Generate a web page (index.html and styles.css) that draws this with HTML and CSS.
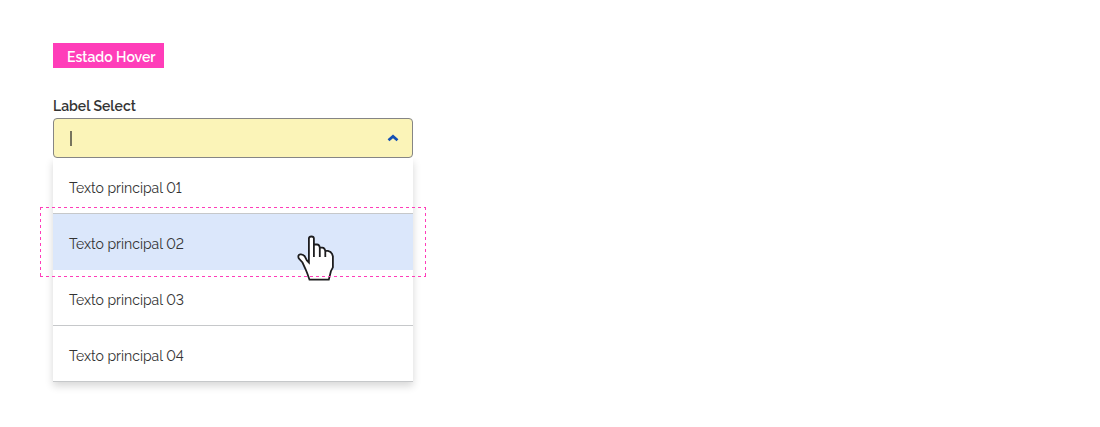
FILE: index.html
```html
<!DOCTYPE html>
<html lang="es">
<head>
<meta charset="utf-8">
<title>Select</title>
<link rel="stylesheet" href="styles.css">
</head>
<body>
<main class="demo">
  <div class="tag">Estado Hover</div>
  <div class="label">Label Select</div>
  <div class="field">
    <span class="caret"></span>
    <svg class="chevron" width="12" height="8" viewBox="0 0 12 8"><path d="M1.5 6.3 6 2.4l4.5 3.9" fill="none" stroke="#1450b4" stroke-width="2.7"/></svg>
  </div>
  <ul class="menu">
    <li class="option"><span>Texto principal 01</span></li>
    <li class="option hover"><span>Texto principal 02</span>
      <svg class="hand" width="40" height="48" viewBox="0 0 40 48"><path d="M12.9 29.5V5.5q0-2 2.5-2t2.5 2v6h3.2q2.2 0 2.7 3.1h2.5q2.3 0 3 3.3h2.7q3 .5 4.2 3.3l.7 2.2v11l-2 3.8-2.1 8.5h-19.3l-2-5.7-2-5-3-6.5-3.8-4.2q-1.2-3.4 1.6-3.9 2.8-.5 4.6 2.2l2 3.8zM17.9 11v13M23.8 14v10M29.3 18v6" fill="#fff" stroke="#1d1d1f" stroke-width="1.8"/></svg>
      <svg class="outline" width="386" height="70"><path d="M0 .5H386M0 69.5H386M.5 0V70M385.5 0V70" fill="none" stroke="#ff3db9" stroke-dasharray="3 3"/></svg>
    </li>
    <li class="option"><span>Texto principal 03</span></li>
    <li class="option"><span>Texto principal 04</span></li>
  </ul>
</main>
</body>
</html>
```
FILE: styles.css
```css
* { box-sizing: border-box; }
body { margin: 0; background: #fff; font-family: Raleway, Lato, sans-serif; font-variant-numeric: lining-nums; color: #333; }
.demo { width: 413px; height: 427px; padding: 43px 0 0 53px; }
.tag { width: 111px; height: 25px; padding-left: 14px; background: #ff3db9; color: #fff; font-size: 14px; font-weight: 600; line-height: 28px; white-space: nowrap; }
.label { margin-top: 28px; height: 22px; font-size: 14px; font-weight: 600; line-height: 20px; }
.field { display: flex; align-items: center; justify-content: space-between; height: 40px; padding: 0 13px 0 16px; border: 1px solid #858585; border-radius: 4px; background: #fbf4b8; }
.caret { width: 2px; height: 15px; background: #77745d; }
.menu { margin: 0; padding: 0; list-style: none; box-shadow: 0 4px 8px rgba(0, 0, 0, .16); clip-path: inset(0 -20px -20px -20px); }
.option { position: relative; height: 56px; padding-left: 16px; border-bottom: 1px solid #c6c8ca; background: #fff; font-size: 14px; line-height: 60px; color: #333; }
.hover { z-index: 1; background: #dbe7fb; border-color: #dbe7fb; }
.outline { position: absolute; left: -13px; top: -7px; }
.hand { position: absolute; left: 243px; top: 19px; }
```
